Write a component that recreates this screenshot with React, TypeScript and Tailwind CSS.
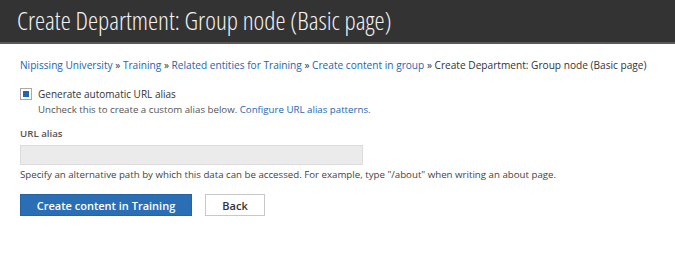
export default function App() {
  return (
    <div className="min-h-screen bg-white font-['Open_Sans',sans-serif]">
      <div className="h-[44px] bg-[#333333] border-b-2 border-[#595959] pl-[17px] flex items-center">
        <h1 className="text-[25.5px] font-light font-stretch-condensed text-[#f2f2f2] leading-none">
          Create Department: Group node (Basic page)
        </h1>
      </div>

      <div className="px-[20px] pt-[14px]">
        <nav className="text-[10.15px] leading-[14px] text-[#333] whitespace-nowrap">
          <a className="text-[#2266b0]">Nipissing University</a> »{" "}
          <a className="text-[#2266b0]">Training</a> »{" "}
          <a className="text-[#2266b0]">Related entities for Training</a> »{" "}
          <a className="text-[#2266b0]">Create content in group</a> » Create Department: Group node (Basic page)
        </nav>

        <div className="mt-[14px] flex items-center gap-[6px]">
          <span className="w-[12px] h-[12px] border border-[#a9a9a9] bg-white flex items-center justify-center">
            <span className="w-[6px] h-[6px] bg-[#2266b0]" />
          </span>
          <span className="text-[10px] text-[#333] leading-[16px]">Generate automatic URL alias</span>
        </div>
        <p className="ml-[18px] mt-[1px] text-[9.7px] leading-[14px] text-[#555]">
          Uncheck this to create a custom alias below.{" "}
          <a className="text-[#2266b0]">Configure URL alias patterns.</a>
        </p>

        <label className="block mt-[10px] text-[9.7px] font-semibold text-[#555] leading-[14px]">URL alias</label>
        <div className="mt-[4px] w-[343px] h-[20px] bg-[#ebebeb] border border-[#dcdcdc]" />
        <p className="mt-[3px] text-[9.7px] leading-[14px] text-[#444]">
          Specify an alternative path by which this data can be accessed. For example, type "/about" when writing an about page.
        </p>

        <div className="mt-[12px] flex gap-[13px]">
          <button className="w-[172px] h-[22px] bg-[#2a6fb6] border border-[#2563a3] text-white text-[11px] font-semibold leading-none">
            Create content in Training
          </button>
          <button className="w-[60px] h-[22px] bg-white border border-[#c8c8c8] text-[#333] text-[11px] font-semibold leading-none">
            Back
          </button>
        </div>
      </div>
    </div>
  );
}
